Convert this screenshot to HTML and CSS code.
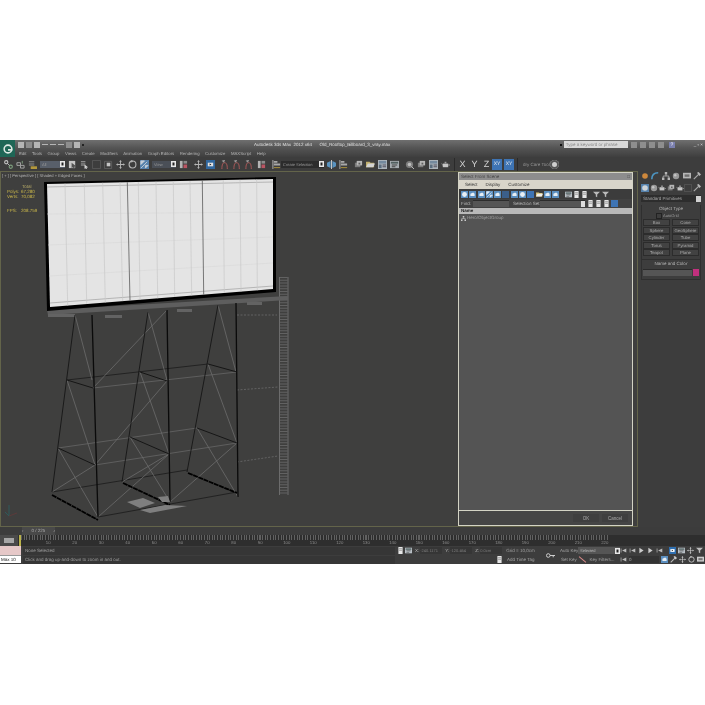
FILE: index.html

```html
<!DOCTYPE html>
<html lang="en">
<head>
  <meta charset="UTF-8">
  <title>Autodesk 3ds Max 2012 x64</title>
  <link rel="stylesheet" href="styles.css">
</head>
<body>
<svg class="sprite" width="0" height="0">
  <symbol id="i-link" viewBox="0 0 10 10"><circle cx="2.5" cy="2.5" r="1.8" fill="none" stroke="#ddd" stroke-width="1.2"/><circle cx="7.5" cy="7.5" r="1.8" fill="none" stroke="#8ab08a" stroke-width="1.2"/><path d="M4 4l2 2" stroke="#ddd"/></symbol>
  <symbol id="i-unlink" viewBox="0 0 10 10"><path d="M1 3h4v3H1zM5 6h4v3H5z" fill="none" stroke="#bbb"/><path d="M7 1v3" stroke="#8ab08a"/></symbol>
  <symbol id="i-bind" viewBox="0 0 10 10"><path d="M1 1h6v1H1zM1 3h6v1H1zM1 5h6v1H1z" fill="#999"/><path d="M3 7h7v3H3z" fill="#c9a93c"/></symbol>
  <symbol id="i-select" viewBox="0 0 10 10"><path d="M1 1h7v8H1z" fill="#ddd"/><path d="M4 3l5 4-2 .5L8 10 6.500 10 5.500 8 4 9z" fill="#555"/></symbol>
  <symbol id="i-name" viewBox="0 0 10 10"><path d="M1 1h5v1H1zM1 3h5v1H1zM1 5h5v1H1z" fill="#bbb"/><path d="M5 5l4 3-2 .5.8 1.500H6.500L5.800 9 5 10z" fill="#eee"/></symbol>
  <symbol id="i-rect" viewBox="0 0 10 10"><path d="M.5.5h9v9h-9z" fill="none" stroke="#5d5d5d"/></symbol>
  <symbol id="i-window" viewBox="0 0 10 10"><path d="M.5 1.500h8v8h-8z" fill="none" stroke="#666"/><path d="M3 3h4v4H3z" fill="#ddd"/></symbol>
  <symbol id="i-move" viewBox="0 0 10 10"><path d="M5 0l1.500 2h-1v2.500H8v-1L10 5 8 6.500v-1H5.500V8h1L5 10 3.500 8h1V5.500H2v1L0 5l2-1.500v1h2.500V2h-1z" fill="#ccc"/></symbol>
  <symbol id="i-rotate" viewBox="0 0 10 10"><circle cx="5" cy="5" r="3.800" fill="none" stroke="#ccc" stroke-width="1.200"/><path d="M3 0l3 1-2 2z" fill="#ccc"/></symbol>
  <symbol id="i-scale" viewBox="0 0 10 10"><path d="M0 0h10v10H0z" fill="#5b8fc0"/><path d="M1 9l7-7M1 1h4L1 5zM6 9V6h3z" stroke="#dfeaf4" fill="#dfeaf4"/></symbol>
  <symbol id="i-pin" viewBox="0 0 10 10"><path d="M1 1h3v8H1z" fill="#c9c9c9"/><path d="M5 5h4v4H5z" fill="#d05a6a"/><path d="M5 1h4v3H5z" fill="#999"/></symbol>
  <symbol id="i-manip" viewBox="0 0 10 10"><path d="M0 0h10v10H0z" fill="#2f6fb0"/><path d="M2 3h6v4H2z" fill="#fff"/><path d="M4 4l2 1-2 1z" fill="#111"/></symbol>
  <symbol id="i-snap" viewBox="0 0 10 10"><path d="M1 10c0-5 1-7 3-7s3 2 3 7" fill="none" stroke="#c96060"/><path d="M1 0h3L2 2h2" fill="none" stroke="#ddd" stroke-width=".8"/></symbol>
  <symbol id="i-mirror" viewBox="0 0 10 10"><path d="M4 1v8L0 7V3zM6 1v8l4-2V3z" fill="#5fa3d8"/><path d="M5 0v10" stroke="#eee"/></symbol>
  <symbol id="i-align" viewBox="0 0 10 10"><path d="M1 0v10" stroke="#ccc"/><path d="M2 1h4v2H2zM2 4h7v2H2z" fill="#bbb"/><path d="M2 8h7v1H2z" fill="#c9a93c"/></symbol>
  <symbol id="i-layer" viewBox="0 0 10 10"><path d="M1 3h6v5H1z" fill="#888"/><path d="M3 1h6v5H3z" fill="#ccc"/><path d="M5 3h2v2H5z" fill="#666"/></symbol>
  <symbol id="i-folder" viewBox="0 0 10 10"><path d="M0 2h4l1 1h4v5H0z" fill="#d7c272"/><path d="M2 4h8L8 8H0z" fill="#eee"/></symbol>
  <symbol id="i-view" viewBox="0 0 10 10"><path d="M0 0h10v10H0z" fill="#c2cbd2"/><path d="M1 1h8v3H1z" fill="#7e97ae"/><path d="M1 5h3v4H1z" fill="#61768a"/><path d="M5 5h4v1H5zM5 7h4v1H5z" fill="#556"/></symbol>
  <symbol id="i-sheet" viewBox="0 0 10 10"><path d="M0 1h10v8H0z" fill="#b9c0c6"/><path d="M1 2h8v2H1z" fill="#566"/><path d="M2 5h6v1H2zM2 7h4v1H2z" fill="#444"/></symbol>
  <symbol id="i-render" viewBox="0 0 10 10"><circle cx="5" cy="5" r="4" fill="#888"/><circle cx="5" cy="5" r="2" fill="#d5d5d5"/><path d="M7 7l3 3" stroke="#ddd"/></symbol>
  <symbol id="i-teapot" viewBox="0 0 10 10"><path d="M2 4h6v4H2z" fill="#ddd"/><path d="M0 3l2 2v2zM8 5h2v1H8zM4 2h2v2H4z" fill="#aaa"/></symbol>
  <symbol id="i-ball" viewBox="0 0 10 10"><path d="M0 0h10v10H0z" fill="#5b8fc0"/><circle cx="5" cy="5" r="3.500" fill="#e8eef3"/></symbol>
  <symbol id="i-box" viewBox="0 0 10 10"><path d="M0 0h10v10H0z" fill="#5b8fc0"/><path d="M2 4l4-2 2 2v3H2z" fill="#e8eef3"/></symbol>
  <symbol id="i-doc" viewBox="0 0 10 10"><path d="M2 0h6v10H2z" fill="#e6e6e6"/><path d="M3 2h4v1H3zM3 4h4v1H3z" fill="#777"/></symbol>
  <symbol id="i-filter" viewBox="0 0 10 10"><path d="M0 1h10L6 5v4L4 8V5z" fill="#bbb"/></symbol>
  <symbol id="i-key" viewBox="0 0 10 10"><circle cx="2.500" cy="5" r="2" fill="none" stroke="#ddd"/><path d="M4.500 5H10M8 5v2" stroke="#ddd"/></symbol>
  <symbol id="i-play" viewBox="0 0 10 10"><path d="M2 1l6 4-6 4z" fill="#ccc"/></symbol>
  <symbol id="i-skip" viewBox="0 0 10 10"><path d="M1 2h1v6H1zM9 2L3 5l6 3z" fill="#bbb"/></symbol>
  <symbol id="i-hammer" viewBox="0 0 10 10"><path d="M1 9l6-6" stroke="#bbb" stroke-width="1.500"/><path d="M5 1l2-1 3 3-2 2z" fill="#ccc"/></symbol>
  <symbol id="i-curve" viewBox="0 0 10 10"><path d="M1 9C1 4 4 1 9 1" fill="none" stroke="#4fa6dc" stroke-width="2"/></symbol>
  <symbol id="i-tree" viewBox="0 0 10 10"><path d="M3.500 0h3v3h-3zM0 7h3v3H0zM7 7h3v3H7z" fill="#ccc"/><path d="M5 3v2M1.500 7V5h7v2" fill="none" stroke="#ccc"/></symbol>
  <symbol id="i-monitor" viewBox="0 0 10 10"><path d="M0 1h10v7H0z" fill="#ccc"/><path d="M2 3h6v3H2z" fill="#777"/></symbol>
  <symbol id="i-dot" viewBox="0 0 10 10"><circle cx="5" cy="5" r="3.500" fill="#e8963c"/></symbol>
  <symbol id="i-sphere" viewBox="0 0 10 10"><circle cx="5" cy="5" r="4" fill="#aaa"/><circle cx="4" cy="4" r="1.500" fill="#ddd"/></symbol>
</svg>

<div class="app">
  <header class="head">
    <div class="logo"><svg viewBox="0 0 14 14" width="12" height="12"><circle cx="7" cy="7" r="4.500" fill="none" stroke="#dfe9e4" stroke-width="1.800"/><path d="M7 7h5v2H7z" fill="#dfe9e4"/></svg></div>
    <div class="head-rows">
      <div class="quick">
        <span class="qi"></span><span class="qi dim"></span><span class="qi"></span><span class="qi line"></span><span class="qi line"></span><span class="qi line"></span><span class="qi dim"></span><span class="qi"></span><span class="qi tiny"></span>
        <span class="title">Autodesk 3ds Max  2012 x64      Old_Rooftop_Billboard_3_vray.max</span>
        <span class="search-arrow"></span>
        <span class="search">Type a keyword or phrase</span>
        <span class="qi win"></span><span class="qi win"></span><span class="qi win"></span><span class="qi win"></span>
        <span class="qi help">?</span>
        <span class="winbtns">_ ▫ ×</span>
      </div>
      <nav class="menu">
        <span>Edit</span><span>Tools</span><span>Group</span><span>Views</span><span>Create</span><span>Modifiers</span><span>Animation</span><span>Graph Editors</span><span>Rendering</span><span>Customize</span><span>MAXScript</span><span>Help</span>
      </nav>
    </div>
  </header>

  <div class="toolbar">
    <svg class="ic"><use href="#i-link"/></svg>
    <svg class="ic"><use href="#i-unlink"/></svg>
    <svg class="ic"><use href="#i-bind"/></svg>
    <span class="dd dd-all">All<b></b></span>
    <svg class="ic"><use href="#i-select"/></svg>
    <svg class="ic"><use href="#i-name"/></svg>
    <svg class="ic"><use href="#i-rect"/></svg>
    <svg class="ic"><use href="#i-window"/></svg>
    <svg class="ic"><use href="#i-move"/></svg>
    <svg class="ic"><use href="#i-rotate"/></svg>
    <svg class="ic"><use href="#i-scale"/></svg>
    <span class="dd dd-view">View<b></b></span>
    <svg class="ic"><use href="#i-pin"/></svg>
    <svg class="ic sep"><use href="#i-move"/></svg>
    <svg class="ic"><use href="#i-manip"/></svg>
    <svg class="ic sep"><use href="#i-snap"/></svg>
    <svg class="ic"><use href="#i-snap"/></svg>
    <svg class="ic"><use href="#i-snap"/></svg>
    <svg class="ic"><use href="#i-pin"/></svg>
    <svg class="ic sep"><use href="#i-align"/></svg>
    <span class="dd dd-set">Create Selection<b></b></span>
    <svg class="ic"><use href="#i-mirror"/></svg>
    <svg class="ic"><use href="#i-align"/></svg>
    <svg class="ic sep"><use href="#i-layer"/></svg>
    <svg class="ic"><use href="#i-folder"/></svg>
    <svg class="ic"><use href="#i-view"/></svg>
    <svg class="ic"><use href="#i-sheet"/></svg>
    <svg class="ic sep"><use href="#i-render"/></svg>
    <svg class="ic"><use href="#i-layer"/></svg>
    <svg class="ic"><use href="#i-view"/></svg>
    <svg class="ic"><use href="#i-teapot"/></svg>
    <span class="divider"></span>
    <span class="axis">X</span><span class="axis">Y</span><span class="axis">Z</span>
    <span class="plane">XY</span><span class="plane">XY</span>
    <span class="divider light"></span>
    <span class="care">dry Care Tool</span>
    <span class="care-ball"></span>
  </div>

  <main class="main">
    <section class="viewport">
      <svg class="scene" viewBox="1 172 636 354" width="636" height="354">
        <!-- ladder and links back to the towers -->
        <path d="M283.500 277V495" stroke="#626262" stroke-width="8" stroke-dasharray="1 1.800"/>
        <path d="M279.500 277V495M288 277V495" stroke="#6c6c6c" stroke-width="1"/>
        <path d="M237 315H277M237 390L278 387M237 462L278 456" stroke="#626262" stroke-dasharray="2 1.500"/>

        <!-- ledge under the board -->
        <path d="M47 310L288 296V300L48 315Z" fill="#5e5e5e"/>
        <path d="M48 314H75V317H48ZM105 315H122V318H105ZM177 309H192V312H177ZM247 302H262V305H247Z" fill="#636363"/>

        <!-- longitudinal members -->
        <path d="M93 388L237 372M58 448L197 428M95 465L237 443" stroke="#666" stroke-width=".8"/>
        <path d="M67 380L208 364M52 492L187 470M98 517L237 492" stroke="#1a1a1a" stroke-width=".8"/>

        <!-- bracing -->
        <path d="M75 315L92 380M148 312L167 380M218 305L236 372M67 380L95 465M140 372L169 454M208 364L237 443M58 448L98 517M130 437L170 502M197 428L238 497M93 388L167 310M95 465L167 381M52 492L95 465M98 517L169 454M122 482L169 454M170 502L237 443" stroke="#6c6c6c" stroke-width=".8" fill="none"/>

        <!-- tower legs -->
        <path d="M75 315L52 492M148 312L122 482M218 305L187 472" stroke="#151515" stroke-width=".9"/>
        <path d="M92 315L98 517M167 310L170 502M236 303L238 497" stroke="#0a0a0a" stroke-width="1.300"/>
        <path d="M67 380L93 388M58 448L95 465M140 372L167 381M130 437L169 454M208 364L237 372M197 428L237 443" stroke="#111" stroke-width=".9"/>
        <path d="M52 495L98 520M123 483L170 505M188 473L237 493" stroke="#000" stroke-width="1.800" stroke-dasharray="5 .6"/>

        <!-- base plates -->
        <path d="M127 502L143 498L155 503L140 508ZM140 510L165 505L187 506L150 513ZM158 497L168 496L170 502L162 502Z" fill="#7f7f7f"/>

        <!-- board -->
        <path d="M44 182L276 177V292L47 311Z" fill="#000"/>
        <path d="M47 184L273 179V289L50 307Z" fill="#e4e4e4"/>
        <path d="M47 187L273 182M50 303L273 286" stroke="#a0a0a0" stroke-width=".7"/>
        <path d="M47 214L273 212M48 245L273 237M49 276L273 263" stroke="#d8d8d8" stroke-width=".6"/>
        <path d="M65 183.600L67.700 305.600M84.300 183.200L86.700 304M102.700 182.800L105.300 302.500M120 182.400L122.700 301.100M138.300 182L140 299.700M156 181.700L157.700 298.300M173.300 181.300L174.700 297M190 181L191.700 295.500M223.300 180.100L224.300 293M240 179.800L241 291.600M256.700 179.400L257.300 290.300" stroke="#c8c8c8" stroke-width=".7"/>
        <path d="M127.300 182.200L130 300.500M202.300 180.600L203.700 294.600" stroke="#5a5a5a" stroke-width=".8"/>

        <!-- axis tripod -->
        <path d="M9 516V505M9 516L5 512" stroke="#2e5a5a"/><path d="M9 516L17 513" stroke="#5c3a3a"/>
      </svg>
      <div class="vp-label">[ + ] [ Perspective ] [ Shaded + Edged Faces ]</div>
      <dl class="stats">
        <dt></dt><dd class="total">Total</dd>
        <dt>Polys:</dt><dd>67,280</dd>
        <dt>Verts:</dt><dd>70,082</dd>
        <dt class="fps">FPS:</dt><dd class="fps">208.759</dd>
      </dl>

      <div class="dialog">
        <div class="dlg-title">Select From Scene<span>□</span></div>
        <div class="dlg-menu"><span>Select</span><span>Display</span><span>Customize</span></div>
        <div class="dlg-tools">
          <svg class="mini"><use href="#i-ball"/></svg>
          <svg class="mini"><use href="#i-box"/></svg>
          <svg class="mini"><use href="#i-box"/></svg>
          <svg class="mini"><use href="#i-scale"/></svg>
          <svg class="mini"><use href="#i-box"/></svg>
          <span class="mini tile"></span>
          <svg class="mini"><use href="#i-box"/></svg>
          <svg class="mini"><use href="#i-ball"/></svg>
          <span class="mini tile bright"></span>
          <svg class="mini"><use href="#i-folder"/></svg>
          <svg class="mini"><use href="#i-box"/></svg>
          <svg class="mini"><use href="#i-box"/></svg>
          <svg class="mini gap"><use href="#i-sheet"/></svg>
          <svg class="mini"><use href="#i-doc"/></svg>
          <svg class="mini"><use href="#i-doc"/></svg>
          <svg class="mini gap"><use href="#i-filter"/></svg>
          <svg class="mini"><use href="#i-filter"/></svg>
        </div>
        <div class="dlg-find">
          <label>Find:</label><span class="field"></span>
          <label class="setlabel">Selection Set:</label><span class="field setfield"><b></b></span>
          <svg class="mini"><use href="#i-doc"/></svg>
          <svg class="mini"><use href="#i-doc"/></svg>
          <svg class="mini"><use href="#i-doc"/></svg>
          <span class="mini tile bright"></span>
        </div>
        <div class="dlg-header">Name</div>
        <div class="dlg-list"><div class="row"><svg class="row-ic"><use href="#i-tree"/></svg>Hero/ObjectGroup</div></div>
        <div class="dlg-foot"><button>OK</button><button>Cancel</button></div>
      </div>
    </section>

    <aside class="panel">
      <div class="tabs">
        <svg class="pi"><use href="#i-dot"/></svg>
        <svg class="pi"><use href="#i-curve"/></svg>
        <svg class="pi"><use href="#i-tree"/></svg>
        <svg class="pi"><use href="#i-sphere"/></svg>
        <svg class="pi"><use href="#i-monitor"/></svg>
        <svg class="pi"><use href="#i-hammer"/></svg>
      </div>
      <div class="tabs second">
        <svg class="pi"><use href="#i-ball"/></svg>
        <svg class="pi"><use href="#i-sphere"/></svg>
        <svg class="pi"><use href="#i-teapot"/></svg>
        <svg class="pi"><use href="#i-layer"/></svg>
        <svg class="pi"><use href="#i-teapot"/></svg>
        <svg class="pi"><use href="#i-rect"/></svg>
        <svg class="pi"><use href="#i-hammer"/></svg>
      </div>
      <div class="pdrop">Standard Primitives<b></b></div>
      <div class="rollout">
        <div class="roll-title">Object Type</div>
        <div class="autogrid"><i></i>AutoGrid</div>
        <div class="prims">
          <span>Box</span><span>Cone</span>
          <span>Sphere</span><span>GeoSphere</span>
          <span>Cylinder</span><span>Tube</span>
          <span>Torus</span><span>Pyramid</span>
          <span>Teapot</span><span>Plane</span>
        </div>
      </div>
      <div class="rollout">
        <div class="roll-title">Name and Color</div>
        <div class="namerow"><span class="namefield"></span><span class="swatch"></span></div>
      </div>
    </aside>
  </main>

  <div class="slider"><span class="thumb"><i>‹</i>0 / 225<i>›</i></span></div>
  <div class="track">
    <span class="track-btn"></span>
    <div class="ticks">
      <span>10</span><span>20</span><span>30</span><span>40</span><span>50</span><span>60</span><span>70</span><span>80</span><span>90</span><span>100</span><span>110</span><span>120</span><span>130</span><span>140</span><span>150</span><span>160</span><span>170</span><span>180</span><span>190</span><span>200</span><span>210</span><span>220</span>
    </div>
  </div>

  <footer class="status">
    <div class="listener"><div class="pink"></div><div class="maxbox">Max 10</div></div>
    <div class="prompt">
      <div class="prompt-row">
        <span class="msg">None Selected</span>
        <svg class="mini lock"><use href="#i-doc"/></svg>
        <svg class="mini"><use href="#i-sheet"/></svg>
        <label>X:</label><span class="coord">-240.1171</span>
        <label>Y:</label><span class="coord">-120.464</span>
        <label>Z:</label><span class="coord">0.0cm</span>
        <span class="grid">Grid = 10,0cm</span>
      </div>
      <div class="prompt-row">
        <span class="msg">Click and drag up-and-down to zoom in and out.</span>
        <span class="timetag"><svg class="mini"><use href="#i-doc"/></svg>Add Time Tag</span>
      </div>
    </div>
    <div class="bigkey"><svg viewBox="0 0 10 10" width="9" height="9"><use href="#i-key"/></svg></div>
    <div class="keys">
      <div class="key-row"><span class="keybtn">Auto Key</span><span class="dd dd-key">Selected<b></b></span></div>
      <div class="key-row"><span class="keybtn">Set Key</span><span class="redkey"></span><span class="keybtn filters">Key Filters...</span></div>
    </div>
    <div class="nav">
      <div class="nav-row">
        <svg class="mini"><use href="#i-skip"/></svg><svg class="mini"><use href="#i-skip"/></svg><svg class="mini"><use href="#i-play"/></svg><svg class="mini"><use href="#i-play"/></svg><svg class="mini"><use href="#i-skip"/></svg>
        <svg class="mini gap"><use href="#i-manip"/></svg><svg class="mini"><use href="#i-sheet"/></svg><svg class="mini"><use href="#i-move"/></svg><svg class="mini"><use href="#i-filter"/></svg>
      </div>
      <div class="nav-row">
        <svg class="mini"><use href="#i-skip"/></svg><span class="frame">0</span>
        <svg class="mini"><use href="#i-box"/></svg><svg class="mini"><use href="#i-hammer"/></svg><svg class="mini"><use href="#i-move"/></svg><svg class="mini"><use href="#i-rotate"/></svg><svg class="mini"><use href="#i-monitor"/></svg>
      </div>
    </div>
  </footer>
</div>
</body>
</html>
```

FILE: styles.css

```css
html, body {
  margin: 0;
  padding: 0;
  background: #fff;
}
body {
  height: 705px;
  overflow: hidden;
  padding-top: 140px;
  box-sizing: border-box;
  font-family: "Liberation Sans", Arial, sans-serif;
  text-rendering: geometricPrecision;
}
.sprite {
  position: absolute;
}
.app {
  width: 705px;
  height: 424px;
  background: #3d3d3d;
  color: #bbb;
  font-size: 4.500px;
  display: flex;
  flex-direction: column;
  overflow: hidden;
  filter: blur(.4px);
}

/* title + menu */
.head {
  height: 17px;
  flex: none;
  display: flex;
  background: linear-gradient(#6f6f6f, #555 45%, #3f3f3f);
}
.logo {
  width: 15px;
  display: flex;
  align-items: center;
  justify-content: center;
  background: #1f6656;
}
.head-rows {
  flex: 1;
  display: flex;
  flex-direction: column;
}
.quick {
  height: 9px;
  display: flex;
  align-items: center;
  gap: 2px;
  padding-left: 3px;
}
.qi {
  width: 6px;
  height: 6px;
  background: #b5b5b5;
  font-size: 5px;
  line-height: 6px;
  text-align: center;
}
.qi.dim { background: #8d8d8d; }
.qi.line { height: 1px; }
.qi.tiny { width: 2px; height: 2px; background: #222; }
.qi.win { background: #8e8e8e; margin-left: 1px; }
.qi.help { background: #7a7fae; color: #fff; margin-left: 3px; }
.title {
  margin-left: 168px;
  color: #e0e0e0;
  white-space: pre;
}
.search-arrow {
  margin-left: auto;
  width: 2px;
  height: 2px;
  background: #111;
}
.search {
  width: 64px;
  height: 7px;
  line-height: 7px;
  padding-left: 2px;
  box-sizing: border-box;
  background: #d9d9d9;
  color: #888;
}
.winbtns {
  margin: 0 2px 0 17px;
  color: #ddd;
  white-space: pre;
}
.menu {
  height: 8px;
  display: flex;
  align-items: center;
  gap: 5.500px;
  padding-left: 4px;
  color: #b4b4b4;
  font-size: 4.300px;
}

/* main toolbar */
.toolbar {
  height: 14px;
  flex: none;
  display: flex;
  align-items: center;
  gap: 3px;
  padding-left: 4px;
  background: #3d3d3d;
}
.ic {
  width: 9px;
  height: 9px;
  flex: none;
  opacity: .85;
}
.ic.sep { margin-left: 3px; }
.dd {
  display: flex;
  align-items: center;
  height: 7px;
  padding-left: 2px;
  box-sizing: border-box;
  background: #2c2c2c;
  color: #999;
  font-size: 4px;
  flex: none;
}
.dd b {
  margin-left: auto;
  width: 5px;
  height: 6px;
  background: #cfcfcf;
  box-shadow: inset 0 0 0 1.500px #e8e8e8, inset 0 0 0 3px #222;
}
.dd-all { width: 25px; background: #585f6a; }
.dd-view { width: 24px; background: #4a4f57; }
.dd-set { width: 43px; margin-left: -3px; }
.divider {
  width: 1px;
  height: 13px;
  margin-left: 1px;
  background: #2a2a2a;
}
.divider.light { margin-left: 1px; }
.axis {
  width: 9px;
  text-align: center;
  font-size: 9px;
  color: #d6d6d6;
}
.axis + .plane { margin-left: -2px; }
.plane {
  width: 10px;
  height: 11px;
  line-height: 11px;
  margin-right: -1px;
  text-align: center;
  font-size: 5px;
  color: #eee;
  background: #3e74b4;
}
.care {
  margin-left: 2px;
  width: 24px;
  color: #999;
  white-space: nowrap;
}
.care-ball {
  width: 9px;
  height: 9px;
  border-radius: 50%;
  background: #cfcfcf;
  box-shadow: inset 0 0 0 2px #555;
}

/* viewport + panel */
.main {
  height: 356px;
  flex: none;
  display: flex;
}
.viewport {
  position: relative;
  width: 636px;
  height: 354px;
  border: 1px solid #63644a;
  background: #3f3f3e;
  flex: none;
}
.scene {
  display: block;
}
.vp-label {
  position: absolute;
  left: 1px;
  top: 1px;
  color: #b4b4b4;
  font-size: 4.100px;
  white-space: nowrap;
}
.stats {
  position: absolute;
  left: 6px;
  top: 12px;
  margin: 0;
  display: grid;
  grid-template-columns: 12px auto;
  column-gap: 2px;
  line-height: 5px;
  color: #c9b64a;
}
.stats dd { margin: 0; }
.stats .total { color: #b9ad6a; padding-left: 1px; }
.stats .fps { margin-top: 9px; }

/* select from scene window */
.dialog {
  position: absolute;
  left: 457px;
  top: 0;
  width: 175px;
  height: 354px;
  box-sizing: border-box;
  border: 1px solid #d3d3c4;
  background: #3f3f3f;
  display: flex;
  flex-direction: column;
}
.dlg-title {
  height: 7px;
  line-height: 7px;
  padding: 0 2px;
  background: #8d8d8d;
  color: #444;
  display: flex;
  justify-content: space-between;
}
.dlg-menu {
  height: 9px;
  display: flex;
  align-items: center;
  gap: 8px;
  padding-left: 6px;
  background: #d9d5ca;
  color: #333;
}
.dlg-tools {
  height: 10px;
  display: flex;
  align-items: center;
  gap: 1.300px;
  padding-left: 2px;
  background: #3c3c3c;
}
.mini {
  width: 7px;
  height: 7px;
  flex: none;
}
.mini.gap { margin-left: 4px; }
.tile { background: #3b5f8a; }
.tile.bright { background: #3e74b4; }
.dlg-find {
  height: 9px;
  display: flex;
  align-items: center;
  gap: 1px;
  padding-left: 2px;
  background: #424242;
  white-space: nowrap;
}
.dlg-find label { width: 11px; }
.dlg-find .setlabel { width: 26px; margin-left: 3px; }
.field {
  width: 36px;
  height: 7px;
  background: #555;
  border-top: 1px solid #2c2c2c;
  box-sizing: border-box;
}
.setfield {
  width: 45px;
  display: flex;
  justify-content: flex-end;
  margin-right: 1px;
}
.setfield b {
  width: 4px;
  background: #ddd;
}
.dlg-header {
  height: 6px;
  line-height: 6px;
  padding-left: 2px;
  background: #b9b9b9;
  color: #222;
  font-weight: bold;
}
.dlg-list {
  flex: 1;
  padding-top: 1px;
  background: #545454;
  border-bottom: 1px solid #d3d3c4;
}
.row {
  display: flex;
  align-items: center;
  gap: 1px;
  padding-left: 2px;
  color: #a0a0a0;
  line-height: 6px;
}
.row-ic {
  width: 5px;
  height: 5px;
}
.dlg-foot {
  height: 14px;
  display: flex;
  align-items: center;
  justify-content: flex-end;
  gap: 3px;
  padding-right: 4px;
  background: #454545;
}
.dlg-foot button {
  width: 26px;
  height: 8px;
  padding: 0;
  border: 0;
  background: #3f3f3f;
  color: #aaa;
  font: 4.500px "Liberation Sans", Arial, sans-serif;
}

.panel {
  flex: 1;
  padding: 0 4px 0 3px;
  box-sizing: border-box;
  background: #3d3d3d;
}
.tabs {
  height: 9px;
  display: flex;
  justify-content: space-between;
  align-items: center;
}
.tabs.second { margin-top: 3px; }
.pi {
  width: 8px;
  height: 8px;
  opacity: .85;
}
.pdrop {
  height: 7px;
  margin-top: 3px;
  display: flex;
  align-items: center;
  padding-left: 2px;
  background: #2d2d2d;
  color: #aaa;
}
.pdrop b {
  margin-left: auto;
  width: 5px;
  height: 6px;
  background: #d0d0d0;
}
.rollout {
  margin-top: 3px;
  padding: 0 1px 3px;
  border: 1px solid #2f2f2f;
  border-top: 0;
}
.rollout + .rollout { margin-top: 0; }
.roll-title {
  height: 7px;
  line-height: 7px;
  text-align: center;
  color: #b9b9b9;
}
.autogrid {
  height: 7px;
  display: flex;
  align-items: center;
  gap: 1px;
  padding-left: 13px;
  font-size: 4px;
  color: #999;
}
.autogrid i {
  width: 4px;
  height: 4px;
  border: 1px solid #222;
}
.prims {
  display: grid;
  grid-template-columns: 1fr 1fr;
  gap: .600px 2px;
}
.prims span {
  height: 7px;
  line-height: 6px;
  box-sizing: border-box;
  text-align: center;
  background: #424242;
  border: .5px solid #2c2c2c;
  color: #aeaeae;
  font-size: 4.300px;
}
.namerow {
  display: flex;
  gap: 1px;
  margin-top: 2px;
}
.namefield {
  flex: 1;
  height: 7px;
  background: #555;
  border-top: 1px solid #2a2a2a;
  box-sizing: border-box;
}
.swatch {
  width: 6px;
  height: 7px;
  background: #c2307e;
}

/* time slider + track */
.slider {
  height: 8px;
  flex: none;
  display: flex;
  background: #3c3c3c;
  box-sizing: border-box;
}
.thumb {
  margin-left: 22px;
  width: 33px;
  display: flex;
  justify-content: space-between;
  line-height: 7px;
  background: #494949;
  color: #aaa;
}
.track {
  height: 11px;
  flex: none;
  display: flex;
  background: #2e2e2e;
}
.track-btn {
  width: 18px;
  background: #4a4a4a;
  box-shadow: inset 4px 3px 0 #4a4a4a, inset -4px -3px 0 #4a4a4a, inset 0 0 0 9px #a6a6a6;
}
.ticks {
  margin-left: 1px;
  width: 590px;
  padding-left: 14px;
  box-sizing: border-box;
  display: flex;
  align-items: flex-end;
  color: #8d8d8d;
  font-size: 4.300px;
  border-left: 2px solid #b9b248;
  background: repeating-linear-gradient(90deg, #616161 0 1px, transparent 1px 2.650px) 0 0 / 100% 5px no-repeat;
}
.ticks span {
  width: 26.500px;
  flex: none;
  text-align: center;
  line-height: 6px;
}

/* status line */
.status {
  height: 18px;
  flex: none;
  display: flex;
  background: #3d3d3d;
}
.listener {
  width: 21px;
  margin-right: 2px;
}
.pink {
  height: 9px;
  background: #e6c8c8;
}
.maxbox {
  height: 8px;
  line-height: 8px;
  padding-left: 1px;
  background: #fff;
  color: #222;
  border-top: 1px solid #999;
  box-sizing: border-box;
}
.prompt {
  width: 523px;
  flex: none;
}
.prompt-row {
  height: 9px;
  display: flex;
  align-items: center;
  gap: 1px;
}
.msg {
  width: 372px;
  height: 8px;
  line-height: 8px;
  padding-left: 2px;
  box-sizing: border-box;
  background: #363636;
  color: #a0a0a0;
  flex: none;
}
.lock { margin-left: 1px; }
.prompt-row label { margin-left: 2px; }
.coord {
  width: 22px;
  height: 7px;
  line-height: 7px;
  background: #363636;
  color: #7d7d7d;
  font-size: 4px;
  overflow: hidden;
}
.grid {
  margin-left: 3px;
  color: #a0a0a0;
  white-space: nowrap;
}
.timetag {
  margin-left: 100px;
  display: flex;
  align-items: center;
  gap: 4px;
  color: #a8a8a8;
}
.bigkey {
  width: 9px;
  margin-right: 5px;
  display: flex;
  align-items: center;
  justify-content: center;
}
.keys {
  width: 60px;
  flex: none;
}
.key-row {
  height: 9px;
  display: flex;
  align-items: center;
  white-space: nowrap;
}
.keybtn {
  width: 18px;
  color: #a6a6a6;
  text-align: center;
}
.dd-key {
  width: 42px;
  background: #555;
  color: #bbb;
}
.redkey {
  width: 9px;
  height: 1px;
  background: #d98a8a;
  transform: rotate(40deg);
}
.keybtn.filters {
  width: 26px;
  margin-left: 2px;
}
.nav {
  flex: 1;
  min-width: 0;
}
.nav-row {
  height: 9px;
  display: flex;
  align-items: center;
  gap: 2px;
}
.frame {
  width: 30px;
  height: 7px;
  line-height: 7px;
  background: #333;
  color: #aaa;
  flex: none;
}
```
